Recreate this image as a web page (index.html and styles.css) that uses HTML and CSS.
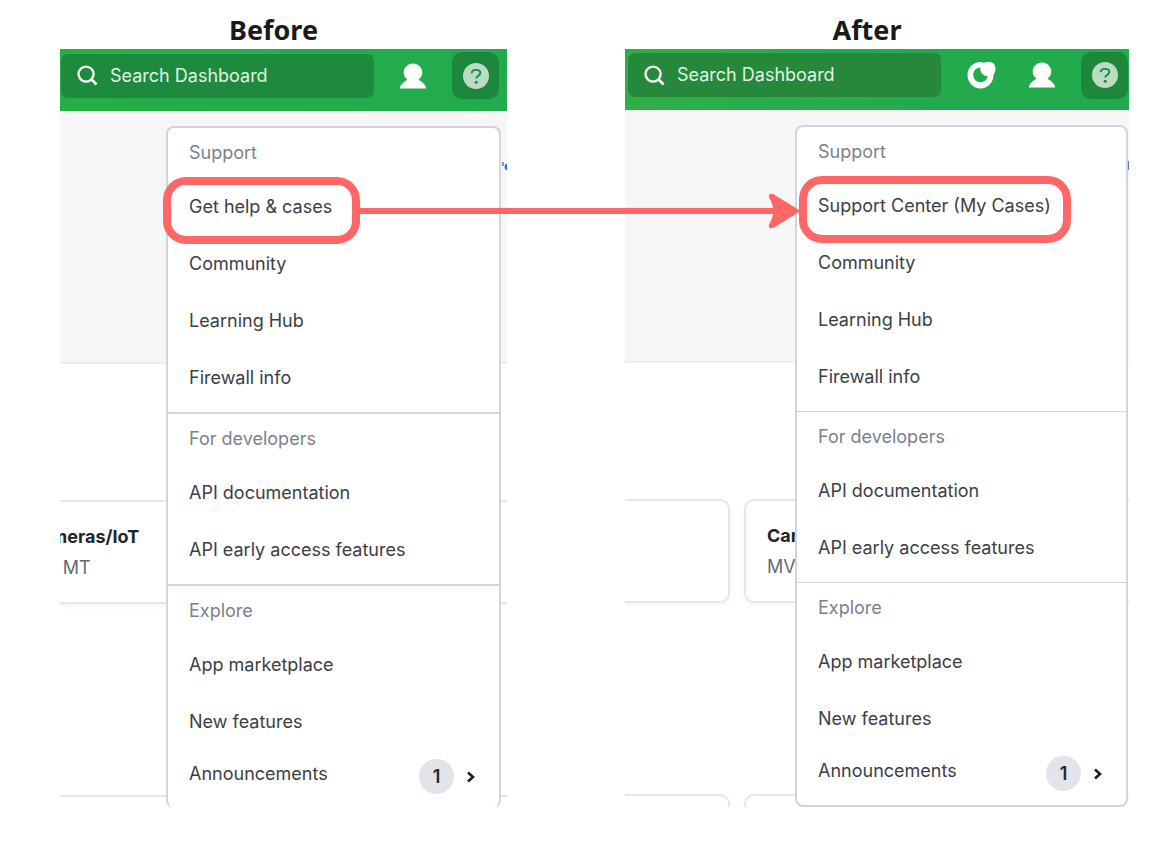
FILE: index.html
```html
<!DOCTYPE html>
<html lang="en">
<head>
<meta charset="utf-8">
<title>Help menu: before and after</title>
<link rel="stylesheet" href="styles.css">
</head>
<body>
<svg class="sprite" aria-hidden="true">
  <symbol id="search" viewBox="0 0 22 22"><circle cx="9.5" cy="9.5" r="7.900" fill="none" stroke="currentColor" stroke-width="2.4"/><path d="M15 15l5.500 5.500" fill="none" stroke="currentColor" stroke-width="2.800"/></symbol>
  <symbol id="user" viewBox="0 0 26 26"><path d="M13 .5c5 0 9.300 4 9.300 9 0 3.200-1.600 5.600-3.800 7.200 3.500 1.800 6.300 4.700 7.500 7.300v1.500H0V24c1.200-2.600 4-5.500 7.500-7.300C5.300 15.100 3.700 12.700 3.700 9.500c0-5 4.300-9 9.300-9z" fill="currentColor"/></symbol>
  <symbol id="moon" viewBox="0 0 29 28"><path d="M13.500 1C6.300 1 .5 6.800.5 14s5.800 13.500 13 13.500S26.500 21.500 26.500 14c1.300-1.700 2-4 2-6.500C28.500 3.500 26 1 22 1c-2.300 0-3.800.3-5 1C15.800 1.300 14.700 1 13.500 1zM13.300 6.600c-.3 5 2.800 8.600 7.500 8.700-.8 3.600-3.700 6-7.300 6A7.300 7.300 0 0 1 6.200 14c0-4 3-7.200 7.100-7.400z" fill="currentColor" fill-rule="evenodd"/></symbol>
  <symbol id="help" viewBox="0 0 26 26"><circle cx="13" cy="13" r="13" fill="#b9dcc3"/><path d="M8.700 10.300C8.800 8 10.600 6.900 13 6.900s4.300 1.200 4.300 3.200c0 3-4 2.900-4 5.400" fill="none" stroke="#1d873c" stroke-width="1.900"/><circle cx="13.200" cy="19.300" r="1.500" fill="#1d873c"/></symbol>
  <symbol id="chevron" viewBox="0 0 10 14"><path d="M2 2.500L7 7l-5 4.500" fill="none" stroke="currentColor" stroke-width="2.600"/></symbol>
</svg>
<main class="comparison">
  <section class="version before">
    <h2>Before</h2>
    <div class="panel">
      <header class="topbar">
        <label class="search"><svg><use href="#search"/></svg><input type="search" placeholder="Search Dashboard" aria-label="Search Dashboard"></label>
        <button class="icon-button" aria-label="Account"><svg><use href="#user"/></svg></button>
        <button class="icon-button active" aria-label="Help"><svg><use href="#help"/></svg></button>
      </header>
      <div class="stage">
        <div class="page">
          <div class="hero"><span class="sliver"></span></div>
          <div class="cards"><article class="card"><strong>Cameras/IoT</strong><span>MV MT</span></article></div>
          <div class="cards"><article class="card"></article></div>
        </div>
        <nav class="menu" aria-label="Help, before">
          <section><h3>Support</h3>
            <a class="marked" href="#">Get help &amp; cases</a><a href="#">Community</a><a href="#">Learning Hub</a><a href="#">Firewall info</a></section>
          <section><h3>For developers</h3>
            <a href="#">API documentation</a><a href="#">API early access features</a></section>
          <section><h3>Explore</h3>
            <a href="#">App marketplace</a><a href="#">New features</a>
            <a class="more" href="#"><span class="label">Announcements</span><span class="badge">1</span><svg><use href="#chevron"/></svg></a></section>
        </nav>
      </div>
    </div>
  </section>
  <section class="version after">
    <h2>After</h2>
    <div class="panel">
      <header class="topbar">
        <label class="search"><svg><use href="#search"/></svg><input type="search" placeholder="Search Dashboard" aria-label="Search Dashboard"></label>
        <button class="icon-button wide" aria-label="Theme"><svg><use href="#moon"/></svg></button>
        <button class="icon-button" aria-label="Account"><svg><use href="#user"/></svg></button>
        <button class="icon-button active" aria-label="Help"><svg><use href="#help"/></svg></button>
      </header>
      <div class="stage">
        <div class="page">
          <div class="hero"><span class="sliver"></span></div>
          <div class="cards"><article class="card"></article><article class="card"><strong>Cam</strong><span>MV</span></article></div>
          <div class="cards"><article class="card"></article><article class="card"></article></div>
        </div>
        <nav class="menu" aria-label="Help, after">
          <section><h3>Support</h3>
            <a class="marked" href="#">Support Center (My Cases)</a><a href="#">Community</a><a href="#">Learning Hub</a><a href="#">Firewall info</a></section>
          <section><h3>For developers</h3>
            <a href="#">API documentation</a><a href="#">API early access features</a></section>
          <section><h3>Explore</h3>
            <a href="#">App marketplace</a><a href="#">New features</a>
            <a class="more" href="#"><span class="label">Announcements</span><span class="badge">1</span><svg><use href="#chevron"/></svg></a></section>
        </nav>
      </div>
    </div>
  </section>
  <div class="arrow" aria-hidden="true"><svg viewBox="0 0 32 36"><path d="M1 4.500C0 1.500 3 -.5 6 1.500L31 17q1.500 1 0 2L6 34.500C3 36.500 0 34.500 1 31.500Q5 25 5.500 18 5 11 1 4.500z" fill="#ff6666"/></svg></div>
</main>
</body>
</html>
```
FILE: styles.css
```css
* { box-sizing: border-box; }
body {
  margin: 0;
  background: #fff;
  color: #3c4046;
  font: 18px/24px Inter, "Liberation Sans", sans-serif;
}
.sprite { position: absolute; width: 0; height: 0; }
.comparison {
  position: relative;
  display: grid;
  grid-template-columns: 447fr 504fr;
  gap: 118px;
  margin: 0 36px 0 60px;
  padding-top: 11px;
}
.version { min-width: 0; }
h2 {
  margin: 0;
  padding-right: 20px;
  color: #1a1a1a;
  font: 700 27px/38px "Noto Sans", "Open Sans", sans-serif;
  text-align: center;
}

.topbar {
  display: flex;
  align-items: center;
  height: 62px;
  padding: 0 8px 9px 1px;
  background: linear-gradient(90deg, #27ae48, #22ab4d);
  color: #fff;
}
.after .topbar { height: 61px; padding: 0 1px 9px 3px; background: linear-gradient(90deg, #2fae47, #22ab4d 60%); }
.search {
  display: flex;
  align-items: center;
  flex: 0 1 313px;
  min-width: 0;
  gap: 12px;
  height: 44px;
  margin-right: auto;
  padding-left: 16px;
  border-radius: 7px;
  background: #1d8a3d;
}
.after .search { background: #26883a; }
.search svg { flex: none; width: 21px; height: 21px; }
.search input {
  width: 100%;
  min-width: 0;
  padding: 0;
  border: 0;
  outline: 0;
  background: none;
  color: #fff;
  font: inherit;
}
.search input::placeholder { color: #e2f1e6; opacity: 1; }
.icon-button {
  display: grid;
  place-items: center;
  flex: none;
  width: 26px;
  height: 47px;
  margin-right: 26px;
  padding: 0;
  border: 0;
  border-radius: 10px;
  background: none;
  color: #fff;
}
.icon-button svg { width: 26px; height: 26px; }
.icon-button.wide { width: 29px; margin-right: 33px; }
.icon-button.wide svg { width: 29px; height: 28px; }
.icon-button.active { width: 47px; margin-right: 0; background: #1d873c; }

.stage { display: grid; }
.page, .menu { grid-area: 1 / 1; }
.page { display: flex; flex-direction: column; min-width: 0; overflow: hidden; }
.hero {
  flex: none;
  height: 253px;
  padding-top: 51px;
  border-bottom: 2px solid #ededee;
  background: #f6f6f7;
}
.sliver {
  display: block;
  width: 6px;
  height: 9px;
  margin-left: auto;
  background: radial-gradient(circle at 7px 5px, #2b6fd0 3px, #fff0 4px), linear-gradient(#6d9bdc, #6d9bdc) 1px 0 / 2px 4px no-repeat;
}
.after .sliver { width: 1px; background: #4d83d8; }
.cards {
  display: flex;
  flex: none;
  gap: 14px;
  margin-top: 136px;
}
.cards + .cards { margin-top: 191px; margin-bottom: -93px; }
.card {
  display: flex;
  flex: none;
  flex-direction: column;
  gap: 7px;
  width: 105px;
  height: 104px;
  padding: 23px 21px;
  border: 2px solid #e3e6ea;
  border-radius: 10px;
  box-shadow: 0 3px 5px #0000000a;
  color: #626a75;
}
.card strong { color: #22252a; }
.after .card + .card { width: 420px; }
.after .card:first-child { border-left: 0; border-radius: 0 10px 10px 0; }
.before .card { align-items: flex-start; width: 100%; padding-left: 0; border-width: 2px 0; border-radius: 0; }
.before .card strong { margin-left: -33px; }
.before .card span { margin-left: -31px; }

.menu {
  display: flex;
  flex-direction: column;
  justify-self: end;
  width: 333px;
  margin: 15px 1px 0 0;
  border: 2px solid #d1d5db;
  border-radius: 8px;
  background: #fff;
}
.before .menu { width: 335px; margin: 15px 6px 0 0; border-bottom: 0; }
.menu section { padding-bottom: 6px; border-bottom: 1px solid #d1d5db; }
.before .menu section { border-bottom-width: 2px; }
.menu section:last-child, .before .menu section:last-child { padding-bottom: 5px; border-bottom: 0; }
h3 {
  margin: 0;
  padding-left: 21px;
  color: #7b818c;
  font: inherit;
  line-height: 50px;
}
.menu a {
  display: block;
  width: fit-content;
  margin-left: 21px;
  color: inherit;
  line-height: 57px;
  text-decoration: none;
}
.menu a.marked { position: relative; }
.marked::after {
  content: "";
  position: absolute;
  inset: -1px -20px -9px -19px;
  border: 8px solid #ff6666;
  border-radius: 23px;
}
.before .marked::after { inset: -1px -28px -9px -26px; }
.menu a.more {
  display: flex;
  align-items: center;
  width: auto;
  height: 53px;
  margin-right: 23px;
  line-height: 24px;
}
.label { flex: 1; padding-bottom: 6px; }
.badge {
  width: 35px;
  height: 35px;
  border-radius: 50%;
  background: #e1e4e8;
  color: #25282d;
  font-weight: 600;
  line-height: 35px;
  text-align: center;
}
.more svg { width: 10px; height: 14px; margin-left: 12px; color: #1c1f24; }

.arrow {
  position: absolute;
  top: 193px;
  right: 329px;
  left: calc(47% - 204px);
  display: flex;
  align-items: center;
}
.arrow::before { content: ""; flex: 1; height: 6px; margin-right: -6px; background: #ff6666; }
.arrow svg { width: 32px; height: 36px; }
```
